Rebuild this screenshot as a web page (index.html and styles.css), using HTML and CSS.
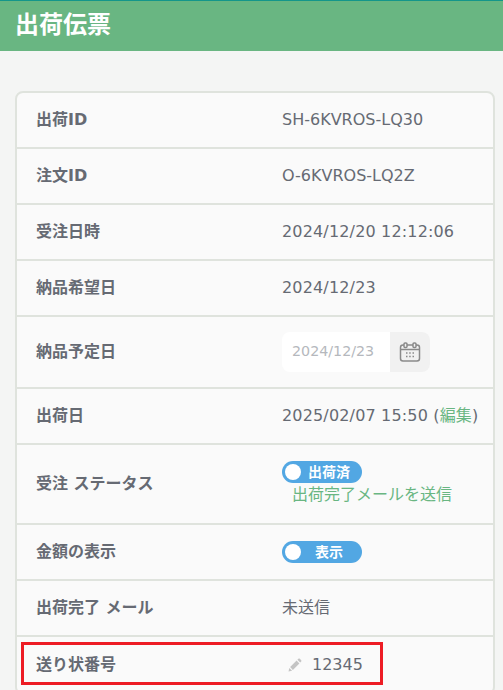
FILE: index.html
```html
<!DOCTYPE html>
<html lang="ja">
<head>
<meta charset="utf-8">
<title>出荷伝票</title>
<link rel="stylesheet" href="styles.css">
</head>
<body>
<header class="page-header"><h1>出荷伝票</h1></header>
<main class="card">
  <div class="row"><div class="label">出荷ID</div><div class="value">SH-6KVROS-LQ30</div></div>
  <div class="row"><div class="label">注文ID</div><div class="value">O-6KVROS-LQ2Z</div></div>
  <div class="row"><div class="label">受注日時</div><div class="value num">2024/12/20 12:12:06</div></div>
  <div class="row"><div class="label">納品希望日</div><div class="value num">2024/12/23</div></div>
  <div class="row row-date">
    <div class="label">納品予定日</div>
    <div class="value">
      <div class="date-input">
        <span class="date-text">2024/12/23</span>
        <span class="date-btn">
          <svg width="22" height="20" viewBox="0 0 22 20" fill="none" stroke="#8a8a8a" stroke-width="1.5">
            <rect x="1.5" y="3" width="19" height="16" rx="2.5"/>
            <path d="M1.5 7.5h19" stroke-width="1.5"/>
            <rect x="5" y="1" width="3" height="4.5" rx="1" fill="#f1f1f1"/>
            <rect x="14" y="1" width="3" height="4.5" rx="1" fill="#f1f1f1"/>
            <path d="M7 11h1.5M10.2 11h1.5M13.5 11h1.5M7 14.5h1.5M10.2 14.5h1.5M13.5 14.5h1.5" stroke-width="1.4"/>
          </svg>
        </span>
      </div>
    </div>
  </div>
  <div class="row"><div class="label">出荷日</div><div class="value num">2025/02/07 15:50 (<a class="link">編集</a>)</div></div>
  <div class="row row-status">
    <div class="label">受注 ステータス</div>
    <div class="value">
      <div class="toggle"><span class="knob"></span><span class="toggle-text">出荷済</span></div>
      <a class="link mail-link">出荷完了メールを送信</a>
    </div>
  </div>
  <div class="row"><div class="label">金額の表示</div><div class="value"><div class="toggle toggle-wide"><span class="knob"></span><span class="toggle-text">表示</span></div></div></div>
  <div class="row"><div class="label">出荷完了 メール</div><div class="value">未送信</div></div>
  <div class="row row-last">
    <div class="label">送り状番号</div>
    <div class="value tracking">
      <svg class="pencil" width="14" height="14" viewBox="0 0 14 14" fill="#c4c4c4"><path d="M0.5 13.5l0.8-3.6 2.8 2.8zM2.1 9.1L8.6 2.6l2.8 2.8-6.5 6.5zM9.4 1.8l1-1c.4-.4 1-.4 1.4 0l1.4 1.4c.4.4.4 1 0 1.4l-1 1z"/></svg>
      <span>12345</span>
    </div>
    <div class="highlight"></div>
  </div>
</main>
</body>
</html>
```
FILE: styles.css
```css
* { box-sizing: border-box; }
html, body { height: 690px; overflow: hidden; }
body {
  margin: 0;
  background: #f4f5f4;
  color: #666a73;
  font-family: "DejaVu Sans", "Noto Sans CJK JP", sans-serif;
  font-size: 16px;
  line-height: 24px;
}
.page-header {
  height: 51px;
  background: #69b682;
  border-top: 1px solid #14968a;
  padding: 8px 15px 0;
}
.page-header h1 {
  margin: 0;
  color: #fff;
  font-size: 24px;
  line-height: 32px;
  font-weight: 700;
}
.card {
  margin: 40px 8px 0 15px;
  background: #fafafa;
  border: 2px solid #dfe3dd;
  border-radius: 8px;
}
.row {
  position: relative;
  display: flex;
  align-items: center;
  height: 56px;
  padding-left: 19px;
  border-bottom: 2px solid #dfe3dd;
}
.row-date { height: 72px; }
.row-status { height: 80px; }
.label {
  width: 246px;
  flex: none;
  font-weight: 700;
  color: #666a73;
}
.value { flex: 1; min-width: 0; white-space: nowrap; }
.num { letter-spacing: 0.16px; }
.link { color: #69b682; }
.date-input {
  display: flex;
  width: 148px;
  height: 40px;
  border-radius: 8px;
  overflow: hidden;
  background: #fff;
}
.date-text {
  width: 108px;
  padding-left: 10px;
  font-size: 14.25px;
  line-height: 38px;
  color: #b5b8bd;
}
.date-btn {
  flex: 1;
  display: flex;
  align-items: center;
  justify-content: center;
  background: #f1f1f1;
}
.toggle {
  display: flex;
  align-items: center;
  width: 80px;
  height: 22px;
  border-radius: 11px;
  background: #52a7e3;
  padding-left: 3px;
}
.knob {
  flex: none;
  width: 16px;
  height: 16px;
  border-radius: 50%;
  background: #fff;
}
.toggle-text {
  flex: 1;
  padding-left: 7px;
  color: #fff;
  font-size: 14px;
  font-weight: 700;
  line-height: 22px;
  white-space: nowrap;
}
.toggle-wide .toggle-text { padding-left: 14px; }
.mail-link {
  display: block;
  margin-left: 10px;
  line-height: 24px;
}
.row-last { border-bottom: 0; }
.tracking {
  display: flex;
  align-items: center;
  padding-left: 6px;
  gap: 10px;
}
.highlight {
  position: absolute;
  left: 4px;
  top: 5px;
  width: 362px;
  height: 43px;
  border: 3px solid #ed1c24;
  pointer-events: none;
}
```
